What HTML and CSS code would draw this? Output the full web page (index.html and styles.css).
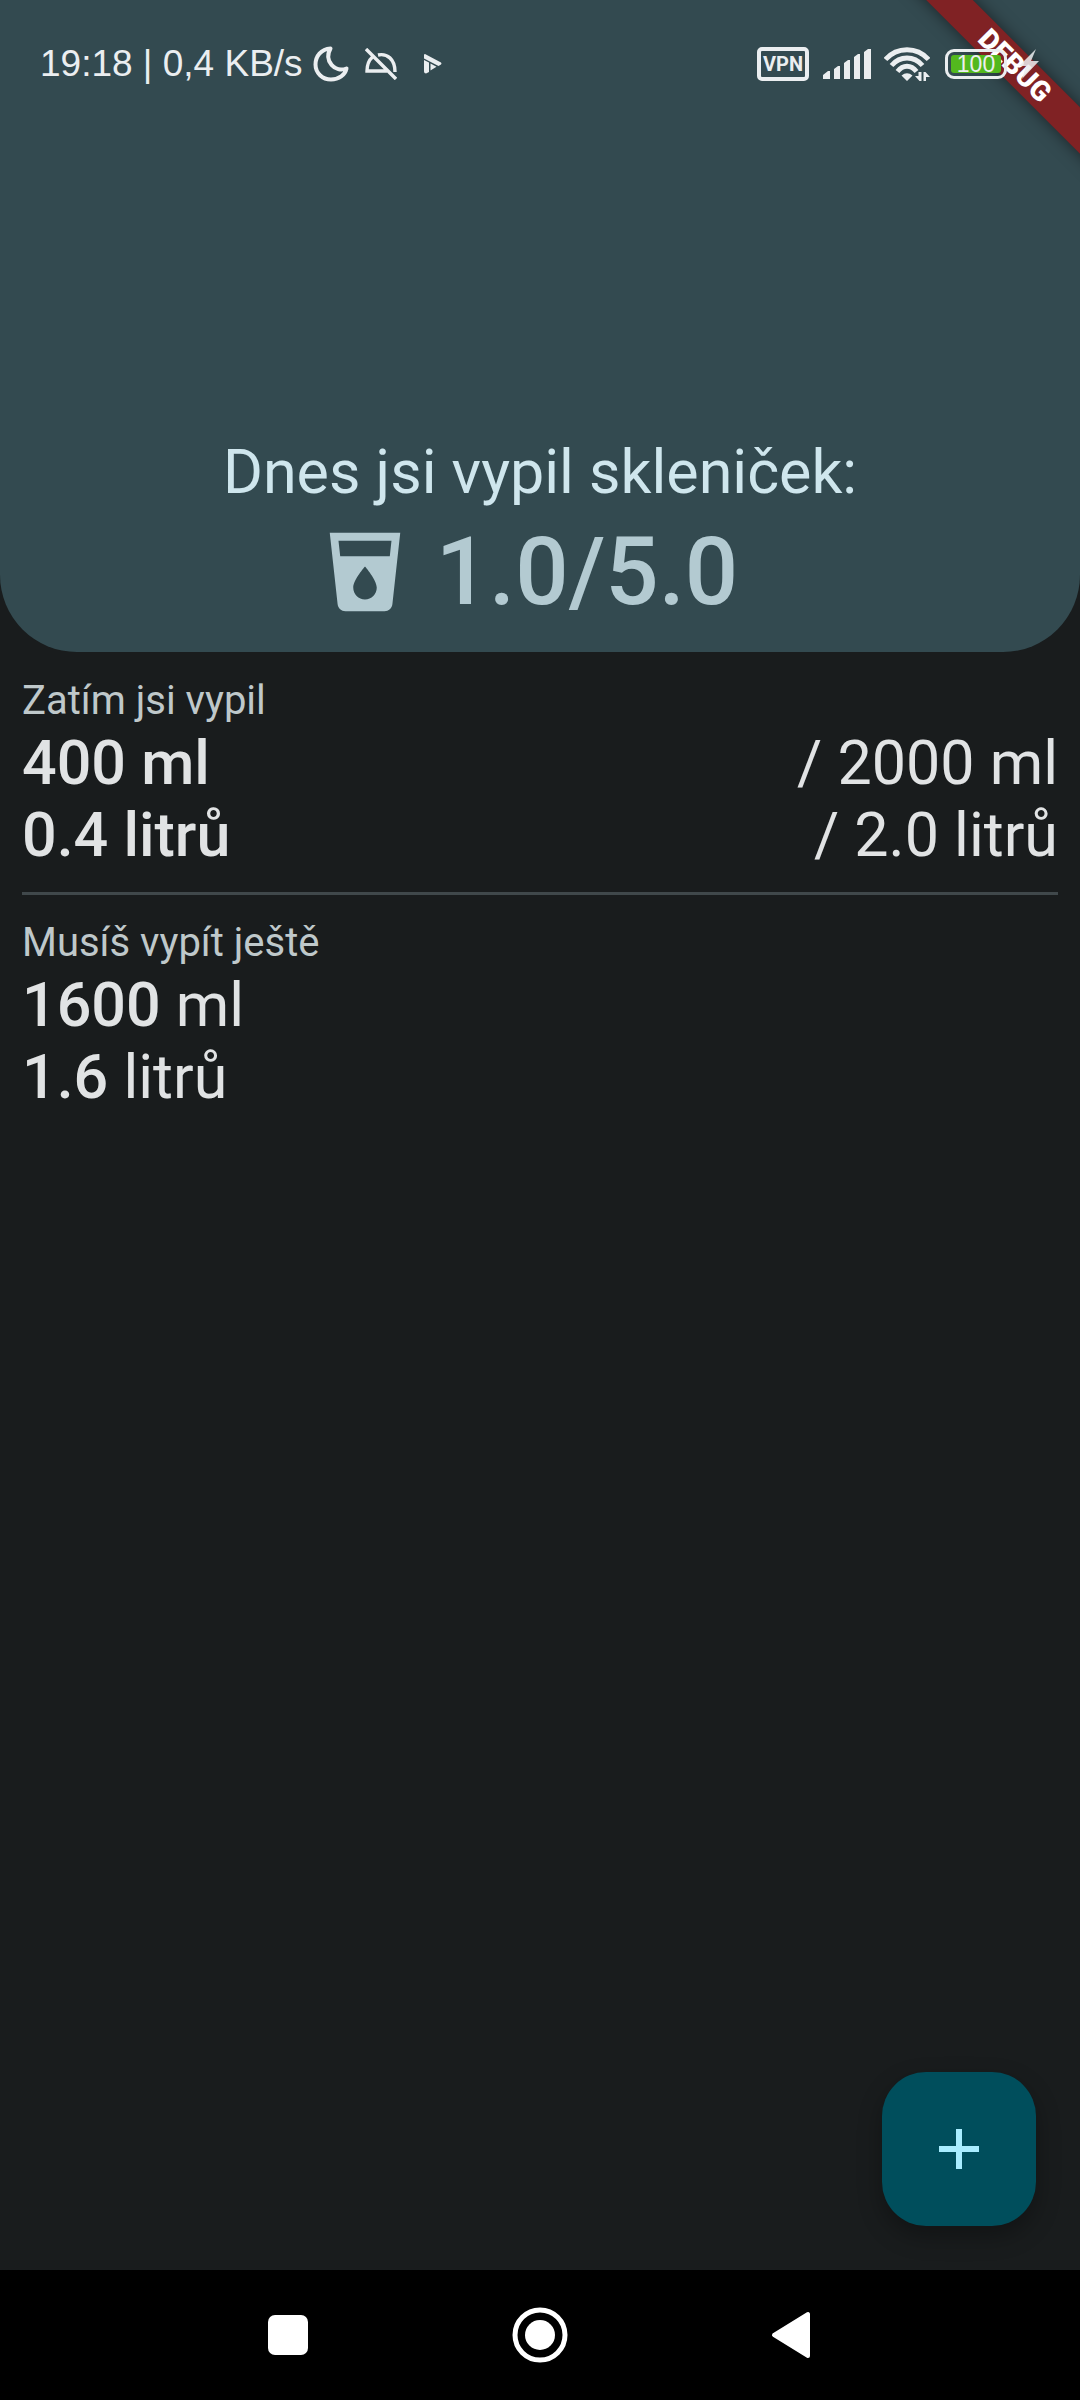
FILE: index.html
```html
<!DOCTYPE html>
<html lang="cs">
<head>
<meta charset="utf-8">
<meta name="viewport" content="width=device-width, initial-scale=1">
<title>Pitný režim</title>
<link rel="stylesheet" href="styles.css">
</head>
<body>
<div class="app">
  <header class="hero">
    <div class="status">
      <span class="status-text">19:18 | 0,4 KB/s</span>
      <svg class="icon-moon" width="36" height="36" viewBox="0 0 36 36" fill="none" stroke="currentColor" stroke-width="4" stroke-linejoin="round"><path d="M17.500 2.500C8 3 2.500 10.500 2.500 18.500C2.500 27 9.500 33.500 18 33.500C26 33.500 32 29 33.500 22.500C22 27 10.500 15 17.500 2.500Z"/></svg>
      <svg class="icon-mute" width="32" height="32" viewBox="0 0 32 32" fill="none" stroke="currentColor" stroke-width="3.400"><path d="M1 1L31 31M7.500 9C3.500 12.500 2 17 2 23H22M13 7C22 5 30 11 30 24"/></svg>
      <svg class="icon-play" width="18" height="20" viewBox="0 0 18 20" fill="currentColor"><path d="M1 0L17 8.500Q18 9.500 17 10.500L14.500 12L0 4.500V1Q0 0 1 0ZM0 6L5 8.500V18L2 19.500Q0 19.500 0 17.500ZM6.500 9.500L12.500 12.700L6.500 16.500Z"/></svg>
      <span class="spacer"></span>
      <span class="vpn">VPN</span>
      <svg class="icon-signal" width="48" height="30" viewBox="0 0 48 30" fill="currentColor"><path d="M0 30V26L5 22H7V30ZM11 30V20L15 17H17V30ZM21 30V14L25 11H27V30ZM31 30V8L35 5H37V30ZM41 30V3L45 0H48V30Z"/></svg>
      <svg class="icon-wifi" width="46" height="34" viewBox="0 0 46 34" fill="none" stroke="currentColor" stroke-width="4.800"><path d="M1.500 12.500C13-.5 33-.5 44.500 12.500M7.500 18.500C16 8.500 30 8.500 38.500 18.500M13.500 24.500C19 17.500 27 17.500 32.500 24.500"/><path d="M17.500 28.500Q23 24 28.500 28.500L23 34ZM34.500 25H37.500V34H35.500L31 29H34.500ZM39.500 34V25H41.500L46 30H42V34Z" fill="currentColor" stroke="none"/></svg>
      <span class="battery"><span class="battery-fill">100</span></span>
      <svg class="icon-bolt" width="20" height="30" viewBox="0 0 20 30" fill="currentColor"><path d="M17 0L0 17H7L3 30L20 12H12Z"/></svg>
    </div>
    <div class="summary">
      <h1 class="title">Dnes jsi vypil skleniček:</h1>
      <div class="score">
        <svg width="94" height="94" viewBox="0 0 24 24" fill="currentColor"><path d="M3 2l2.010 18.230C5.130 21.230 5.970 22 7 22h10c1.030 0 1.870-.77 1.990-1.770L21 2H3zm9 17c-1.660 0-3-1.340-3-3 0-2 3-5.400 3-5.400s3 3.400 3 5.400c0 1.660-1.340 3-3 3zm6.330-11H5.670l-.44-4h13.530l-.43 4z"/></svg>
        <span>1.0/5.0</span>
      </div>
    </div>
  </header>
  <main class="content">
    <section>
      <h2 class="label">Zatím jsi vypil</h2>
      <div class="row"><strong>400 ml</strong><span>/ 2000 ml</span></div>
      <div class="row"><strong>0.4 litrů</strong><span>/ 2.0 litrů</span></div>
    </section>
    <hr class="divider">
    <section>
      <h2 class="label">Musíš vypít ještě</h2>
      <div class="row"><span><strong>1600</strong> ml</span></div>
      <div class="row"><span><strong>1.6</strong> litrů</span></div>
    </section>
    <button class="fab" type="button" aria-label="Přidat"><svg width="40" height="40" viewBox="0 0 40 40" stroke="currentColor" stroke-width="6"><path d="M0 20H40M20 0V40"/></svg></button>
  </main>
  <nav class="navbar">
    <button type="button" aria-label="Poslední aplikace"><svg width="56" height="56" viewBox="0 0 56 56"><rect x="8" y="8" width="40" height="40" rx="7" fill="currentColor"/></svg></button>
    <button type="button" aria-label="Domů"><svg width="56" height="56" viewBox="0 0 56 56"><circle cx="28" cy="28" r="25" fill="none" stroke="currentColor" stroke-width="5"/><circle cx="28" cy="28" r="15" fill="currentColor"/></svg></button>
    <button type="button" aria-label="Zpět"><svg width="56" height="56" viewBox="0 0 56 56"><path d="M10 28L44 7V49Z" fill="currentColor" stroke="currentColor" stroke-width="4" stroke-linejoin="round"/></svg></button>
  </nav>
  <div class="ribbon-clip"><div class="ribbon">DEBUG</div></div>
</div>
</body>
</html>
```

FILE: styles.css
```css
* { box-sizing: border-box; }
body { margin: 0; background: #191c1d; color: #e1e3e4; font-family: Roboto, sans-serif; }
svg { display: block; flex: none; }
.app { position: relative; min-height: 100vh; display: flex; flex-direction: column; overflow: hidden; }
.hero { min-height: 652px; display: flex; flex-direction: column; justify-content: space-between; background: #334a50; border-radius: 0 0 77px 77px; }
.status { position: relative; z-index: 2; display: flex; align-items: center; height: 128px; padding: 0 41px 0 40px; color: #ebeef0; }
.status-text { font: 37px/44px "Liberation Sans", sans-serif; white-space: nowrap; }
.icon-moon { margin-left: 10px; }
.icon-mute { margin-left: 16px; }
.icon-play { margin-left: 27px; }
.spacer { flex: 1; }
.vpn { width: 52px; height: 34px; border: 4px solid; border-radius: 5px; font: 700 20px/27px Roboto, sans-serif; text-align: center; }
.icon-signal { margin-left: 14px; }
.icon-wifi { margin-left: 13px; }
.battery { width: 62px; height: 30px; margin-left: 15px; padding: 3px; border: 3px solid; border-radius: 9px; }
.battery-fill { display: block; height: 18px; border-radius: 3px; background: #53b81e; font: 23px/18px "Liberation Sans", sans-serif; text-align: center; }
.icon-bolt { margin-left: 12px; opacity: .85; }
.summary { padding-bottom: 24px; text-align: center; }
.title { margin: 0 0 8px; font-size: 61px; line-height: 72px; font-weight: 400; color: #cfe6ed; }
.score { display: flex; align-items: center; justify-content: center; gap: 24px; padding-right: 24px; font-size: 94px; line-height: 112px; font-weight: 500; color: #b3cad1; }
.content { position: relative; flex: 1; padding: 22px; }
.label { margin: 0; font-size: 40px; line-height: 53px; font-weight: 400; color: #bfc8ca; }
.row { display: flex; justify-content: space-between; font-size: 61px; line-height: 72px; }
.row strong { font-weight: 500; }
.divider { margin: 21px 0; border: 0; height: 3px; background: #40484b; }
.fab { position: absolute; right: 44px; bottom: 44px; width: 154px; height: 154px; padding: 0; border: 0; border-radius: 44px; background: #004e5c; color: #a9edff; display: grid; place-items: center; box-shadow: 0 10px 24px rgba(0, 0, 0, .3); }
.navbar { display: flex; height: 130px; padding: 0 162px; align-items: center; background: #000; }
.navbar button { flex: 1; display: grid; place-items: center; padding: 0; border: 0; background: none; color: #fff; }
.ribbon-clip { position: absolute; z-index: 1; top: 0; right: 0; width: 220px; height: 220px; overflow: hidden; }
.ribbon { position: absolute; top: 49px; right: -85px; width: 300px; height: 33px; transform: rotate(45deg); background: #802224; box-shadow: 0 0 16px rgba(0, 0, 0, .5); color: #fff; font-size: 28px; line-height: 33px; font-weight: 900; text-align: center; }
```
